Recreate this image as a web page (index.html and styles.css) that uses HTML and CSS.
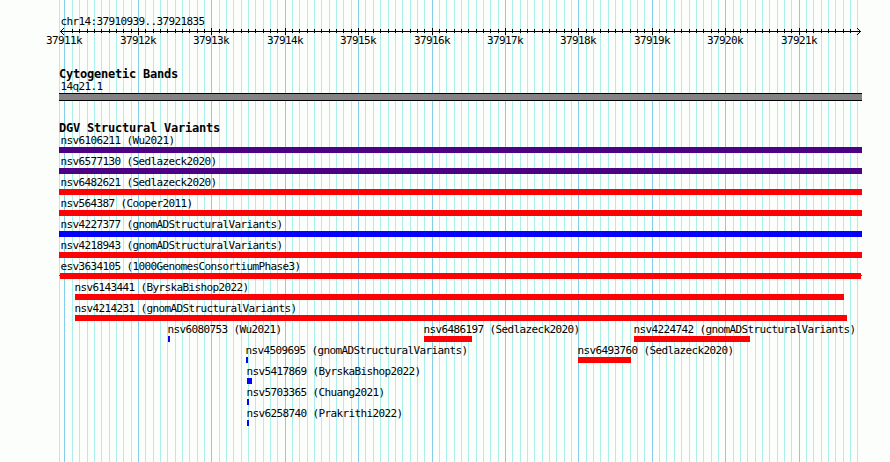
FILE: index.html
```
<!DOCTYPE html>
<html lang="en">
<head>
<meta charset="utf-8">
<title>chr14:37910939..37921835</title>
<link rel="stylesheet" href="styles.css">
</head>
<body>
<main class="browser">
<svg class="grid" width="890" height="462" shape-rendering="crispEdges" aria-hidden="true"><path id="minor" class="minor"/><path id="major" class="major"/></svg>
<header class="overview">
<div class="region">chr14:37910939..37921835</div>
<svg class="axis" width="890" height="8" shape-rendering="crispEdges" aria-hidden="true"><path d="M60 3.5H861"/><path d="M60 3h1v1h-1zM61 2h1v1h-1zM61 4h1v1h-1zM62 1h1v1h-1zM62 5h1v1h-1zM63 0h1v1h-1zM63 6h1v1h-1zM860 3h1v1h-1zM859 2h1v1h-1zM859 4h1v1h-1zM858 1h1v1h-1zM858 5h1v1h-1zM857 0h1v1h-1zM857 6h1v1h-1z" class="arrow"/><path id="ticks"/></svg>
<div class="scale" id="scale"></div>
</header>
<section class="cyto">
<h2>Cytogenetic Bands</h2>
<div class="band-name">14q21.1</div>
<div class="band"></div>
</section>
<section class="variants">
<h2>DGV Structural Variants</h2>
<div id="rows"></div>
</section>
</main>
<script src="tracks.js"></script>
</body>
</html>
```
FILE: styles.css
```
body {
  margin: 0;
  background: #fcfefc;
  color: #000;
  font: 11px/13px "DejaVu Sans Mono", "Liberation Mono", monospace;
  letter-spacing: -0.622px;
}
.browser {
  position: relative;
  width: 890px;
  height: 462px;
  overflow: hidden;
  white-space: nowrap;
}
.grid {
  position: absolute;
  inset: 0;
  z-index: -1;
}
.minor { stroke: #acf0ec; }
.major { stroke: #84ceec; }
h2 {
  margin: 0 0 0 59px;
  font-size: 12px;
  line-height: 14px;
  letter-spacing: -0.224px;
}
.overview {
  padding-top: 15px;
  height: 52px;
}
.region { margin-left: 60.5px; }
.axis {
  display: block;
  stroke: #000;
}
.arrow { fill: #000; stroke: none; }
.scale {
  display: grid;
  margin-top: -2px;
}
.scale span {
  grid-area: 1 / 1;
  margin-left: calc(var(--x) * 1px - 18px);
}
.cyto { height: 54px; }
.band-name { margin: -1px 0 0 60.5px; }
.band {
  box-sizing: border-box;
  width: 803px;
  height: 8px;
  margin-left: 59px;
  border: solid #000;
  border-width: 1px 0;
  background: #848284;
}
.row {
  display: grid;
  height: 21px;
}
#rows { margin-top: -1px; }
.feature {
  grid-area: 1 / 1;
  margin-left: calc(var(--x) * 1px);
  width: calc(var(--w) * 1px);
}
.label {
  height: 13px;
  margin-left: -0.5px;
}
.wide .label { margin-left: 1.5px; }
.bar {
  height: 6px;
  background: #fc0204;
}
.indigo .bar { background: #4c0284; }
.blue .bar { background: #0402fc; }
.capped .bar {
  background: linear-gradient(#fc0204, #fc0204) center / calc(100% - 2px) 100% no-repeat,
    linear-gradient(#fc0204, #fc0204) 0 2px / 100% 1px no-repeat;
}
```
FILE: tracks.js
```
const origin = 64.48, kb = 73.415;
let minor = 'M59.5 0V462', major = '', ticks = '';
const scale = document.getElementById('scale');
for (let i = 0; i <= 108; i++) {
  const x = Math.round(origin + i * kb / 10);
  // The outermost grid lines coincide with the arrowheads and carry no tick
  const ticked = i > 0 && i < 108;
  if (i % 10 === 0) {
    major += `M${x + 0.5} 0V462`;
    if (ticked) ticks += `M${x + 0.5} 0V7`;
    const s = document.createElement('span');
    s.style.setProperty('--x', x);
    s.textContent = `${37911 + i / 10}k`;
    scale.append(s);
  } else {
    minor += `M${x + 0.5} 0V462`;
    if (ticked) ticks += `M${x + 0.5} 1V5`;
  }
}
document.getElementById('minor').setAttribute('d', minor);
document.getElementById('major').setAttribute('d', major);
document.getElementById('ticks').setAttribute('d', ticks);

// Each feature: label, left, width, modifiers
const rows = [
  [['nsv6106211 (Wu2021)', 59, 803, 'wide indigo']],
  [['nsv6577130 (Sedlazeck2020)', 59, 803, 'wide indigo']],
  [['nsv6482621 (Sedlazeck2020)', 59, 803, 'wide']],
  [['nsv564387 (Cooper2011)', 59, 803, 'wide']],
  [['nsv4227377 (gnomADStructuralVariants)', 59, 803, 'wide blue']],
  [['nsv4218943 (gnomADStructuralVariants)', 59, 803, 'wide']],
  [['esv3634105 (1000GenomesConsortiumPhase3)', 59, 803, 'wide capped']],
  [['nsv6143441 (ByrskaBishop2022)', 75, 769, '']],
  [['nsv4214231 (gnomADStructuralVariants)', 75, 772, '']],
  [['nsv6080753 (Wu2021)', 168, 2, 'blue'], ['nsv6486197 (Sedlazeck2020)', 424, 48, ''], ['nsv4224742 (gnomADStructuralVariants)', 634, 116, '']],
  [['nsv4509695 (gnomADStructuralVariants)', 246, 2, 'blue'], ['nsv6493760 (Sedlazeck2020)', 578, 53, '']],
  [['nsv5417869 (ByrskaBishop2022)', 247, 5, 'blue']],
  [['nsv5703365 (Chuang2021)', 247, 2, 'blue']],
  [['nsv6258740 (Prakrithi2022)', 247, 2, 'blue']]
];
const host = document.getElementById('rows');
for (const row of rows) {
  const el = document.createElement('div');
  el.className = 'row';
  for (const [name, x, w, mod] of row) {
    const f = document.createElement('div');
    f.className = `feature ${mod}`;
    f.style.setProperty('--x', x);
    f.style.setProperty('--w', w);
    f.innerHTML = `<div class="label">${name}</div><div class="bar"></div>`;
    el.append(f);
  }
  host.append(el);
}
```
